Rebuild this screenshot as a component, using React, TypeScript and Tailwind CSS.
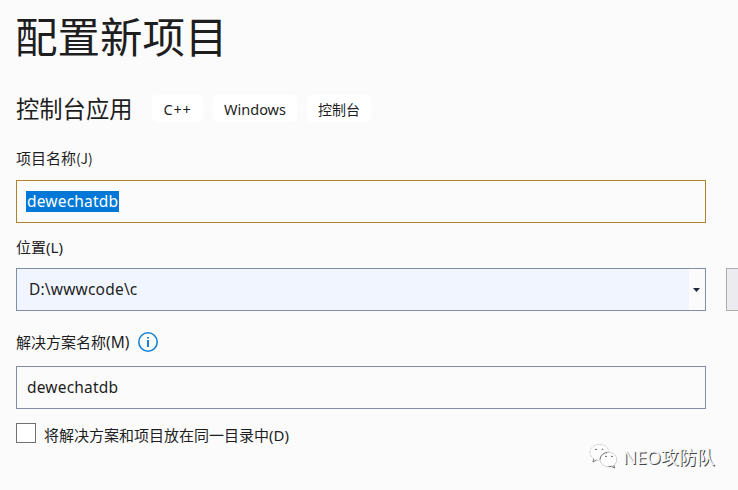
import type { ReactNode } from "react";

function Tag({ className, children }: { className: string; children: ReactNode }) {
  return (
    <span className={`flex h-[27px] items-center justify-center rounded-[5px] bg-white pt-0.5 leading-none ${className}`}>
      {children}
    </span>
  );
}

function InfoIcon() {
  return (
    <svg className="h-5 w-5" viewBox="0 0 20 20" fill="none">
      <circle cx="10" cy="10" r="9.2" stroke="#1583d8" strokeWidth="1.6" />
      <path d="M9 5h2v1.500H9zM9 8h2v7H9z" fill="#1583d8" />
    </svg>
  );
}

function WeChatIcon() {
  return (
    <svg className="h-[28px] w-[30px]" viewBox="0 0 30 28" fill="none">
      <path
        d="M10.500 1.500C5 1.500 1 5 1 9.300c0 2.800 1.400 5 3.700 6.400L4 19l3.400-2c1 .3 2 .4 3.400.4C10.500 12.500 14.500 9 20 9 19.500 4.500 15.500 1.500 10.500 1.500Z"
        fill="#fff"
        stroke="#bbb"
        strokeWidth=".7"
        strokeDasharray="3 1"
      />
      <path
        d="M19.500 9.500c-5 0-8.300 3.200-8.300 7s3.300 7.100 8.300 7.100c1 0 2-.1 3-.4l3.200 1.800-.8-2.800c1.700-1.400 2.800-3.300 2.800-5.700 0-3.800-3.500-7-8.200-7Z"
        fill="#fff"
        stroke="#bbb"
        strokeWidth=".7"
      />
      <path
        d="M19.500 23.600c1 0 2-.1 3-.4l3.200 1.800-.8-2.800M4.700 15.700 4 19l3.400-2M11.200 16.500c0-3.500 3-6.500 7-7"
        stroke="#666"
        strokeWidth=".8"
      />
      <path
        d="M6 6.600q1-.9 1.800 0M12.600 6.600q1-.9 1.800 0M16 13.600q1-.9 1.800 0M22 13.600q1-.9 1.800 0"
        stroke="#555"
        strokeWidth="1"
      />
    </svg>
  );
}

export default function App() {
  return (
    <main className="relative h-[490px] w-[738px] overflow-hidden bg-[#fbfbfb] pl-4 font-['Noto_Sans','Noto_Sans_CJK_SC',sans-serif] text-[#1e1e1e] whitespace-nowrap">
      <h1 className="-ml-px flex h-[70px] items-center font-['Noto_Sans_CJK_SC',sans-serif] text-[42.500px] font-normal leading-none">
        配置新项目
      </h1>
      <div className="mt-[25px] flex h-[27px] items-center">
        <h2 className="w-[136px] font-['Noto_Sans_CJK_SC',sans-serif] text-[23.300px] font-normal leading-none">控制台应用</h2>
        <div className="flex gap-[10px]">
          <Tag className="w-[51px] text-[14.500px] tracking-[0.8px]">C++</Tag>
          <Tag className="w-[84px] text-[14.500px]">Windows</Tag>
          <Tag className="w-[64px] text-[14px]">控制台</Tag>
        </div>
      </div>

      <label className="mt-6 flex h-6 items-center text-[15px] leading-none">
        项目名称<span className="font-['Noto_Sans_CJK_SC',sans-serif] text-[14px]">(J)</span>
      </label>
      <div className="mt-[10px] flex h-[43px] w-[690px] items-center border border-[#ad832d] pl-[9px]">
        <span className="flex h-[21px] w-[93px] items-center bg-[#0078d7] pl-px text-[15.500px] leading-none tracking-[0.2px] text-white">
          dewechatdb
        </span>
      </div>

      <label className="mt-3 flex h-6 items-center text-[15px] leading-none">
        位置<span className="text-[15px]">(L)</span>
      </label>
      <div className="mt-[9px] flex gap-5">
        <div className="flex h-[43px] w-[690px] shrink-0 border border-[#818fa6]">
          <span className="flex flex-1 items-center bg-[#f1f5ff] pl-3 text-[15.500px] leading-none tracking-[0.2px]">
            D:\wwwcode\c
          </span>
          <span className="flex w-4 items-center pl-1">
            <svg className="h-1 w-[7px]" viewBox="0 0 7 4">
              <path d="M0 0h7L3.500 4z" fill="#1b293e" />
            </svg>
          </span>
        </div>
        <div className="h-[43px] w-10 shrink-0 border border-[#acacac] bg-[#ececf0]" />
      </div>

      <label className="mt-[19px] flex h-6 items-center text-[15px] leading-none">
        <span className="w-[122px] pt-0.5">
          解决方案名称<span className="text-[15.500px]">(M)</span>
        </span>
        <InfoIcon />
      </label>
      <div className="mt-3 flex h-[43px] w-[690px] items-center border border-[#818fa6] pl-[10px] text-[15.500px] leading-none tracking-[0.2px]">
        dewechatdb
      </div>

      <div className="mt-[14px] flex h-5 items-center gap-2">
        <span className="h-5 w-5 border border-[#717171] bg-white" />
        <span className="mt-1 text-[15px] leading-none">
          将解决方案和项目放在同一目录中<span className="text-[15px]">(D)</span>
        </span>
      </div>

      <div className="absolute left-[589px] top-[443px] flex items-center gap-1">
        <WeChatIcon />
        <span className="text-[18px] font-normal leading-none text-[#f4f4f4] [text-shadow:1px_1px_0.500px_#444]">NEO攻防队</span>
      </div>
    </main>
  );
}
